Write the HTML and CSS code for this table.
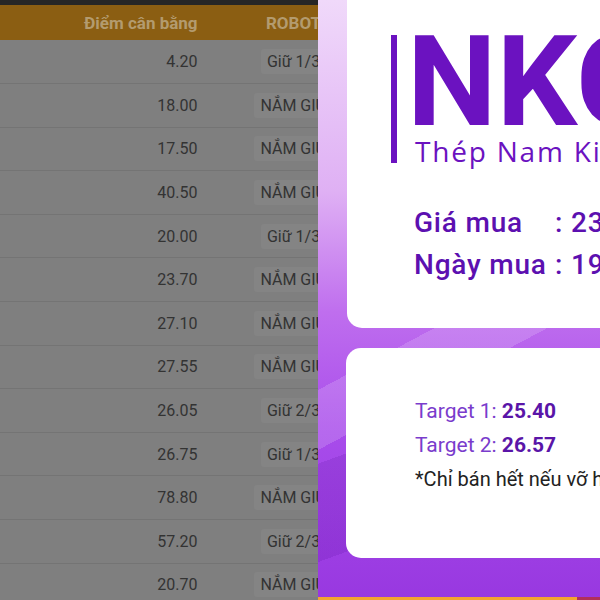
FILE: index.html
```html
<html lang="vi">
    <head>
        <title>Robot NKG</title>
        <link rel="stylesheet" href="styles.css">
    </head>
    <body>
        <div class="topbar"></div>
        <table class="robot-table">
            <thead>
                <tr>
                    <th class="col-code"></th>
                    <th class="col-price">Điểm cân bằng</th>
                    <th class="col-robot">ROBOT</th>
                    <th class="col-rest"></th>
                </tr>
            </thead>
            <tbody id="rows"></tbody>
        </table>

        <div class="modal">
            <div class="card card-top">
                <div class="logo">
                    <div class="logo-name">NKG</div>
                    <div class="logo-sub">Thép Nam Kim</div>
                </div>
                <div class="buy">
                    <div class="buy-line"><span class="buy-label">Giá mua</span>: 23.85</div>
                    <div class="buy-line"><span class="buy-label">Ngày mua</span>: 19/01/2021</div>
                </div>
            </div>
            <div class="card card-bottom">
                <div class="target">Target 1: <b>25.40</b></div>
                <div class="target">Target 2: <b>26.57</b></div>
                <div class="note">*Chỉ bán hết nếu vỡ hỗ trợ</div>
            </div>
            <div class="modal-space"></div>
            <div class="modal-foot"></div>
        </div>

        <script>
            //Rows of the table behind the popup
            const rowData = [
                ["4.20", "Giữ 1/3"],
                ["18.00", "NẮM GIỮ"],
                ["17.50", "NẮM GIỮ"],
                ["40.50", "NẮM GIỮ"],
                ["20.00", "Giữ 1/3"],
                ["23.70", "NẮM GIỮ"],
                ["27.10", "NẮM GIỮ"],
                ["27.55", "NẮM GIỮ"],
                ["26.05", "Giữ 2/3"],
                ["26.75", "Giữ 1/3"],
                ["78.80", "NẮM GIỮ"],
                ["57.20", "Giữ 2/3"],
                ["20.70", "NẮM GIỮ"]
            ];

            const rows = document.getElementById("rows");
            rowData.forEach(r => {
                const tr = document.createElement("tr");
                tr.innerHTML = `
                    <td></td>
                    <td class="col-price">${r[0]}</td>
                    <td class="col-robot"><span class="badge">${r[1]}</span></td>
                    <td></td>
                `;
                rows.appendChild(tr);
            });
        </script>
    </body>
</html>
```
FILE: styles.css
```css
body{
    margin:0;
    width:600px;
    height:600px;
    overflow:hidden;
    position:relative;
    background:#7f7f7f;
    font-family: Roboto, "Liberation Sans", sans-serif;
}
.topbar{
    height:5px;
    background:#262626;
}
.robot-table{
    width:560px;
    border-collapse:collapse;
    font-size:16px;
    color:#333;
}
.robot-table th{
    height:35px;
    padding:0 8px;
    background:#8b5e12;
    color:#b39b6f;
    font-size:17px;
    font-weight:700;
    white-space:nowrap;
}
.robot-table td{
    height:43.6px;
    padding:0 8px;
    border-bottom:1px solid #747474;
    white-space:nowrap;
}
.col-code{
    width:60px;
}
.col-price{
    width:112px;
    text-align:right;
}
.col-robot{
    width:160px;
    text-align:center;
}
.badge{
    display:inline-block;
    padding:3px 6px;
    background:#848484;
    border-radius:3px;
}

/* popup */
.modal{
    position:absolute;
    top:0;
    left:318px;
    width:282px;
    height:600px;
    overflow:hidden;
    display:flex;
    flex-direction:column;
    padding-left:29px;
    box-sizing:border-box;
    background:
        linear-gradient(152deg, transparent 52%, rgba(255,255,255,.16) 52%, rgba(255,255,255,.16) 60%, transparent 60%),
        linear-gradient(160deg, transparent 66%, rgba(70,0,140,.14) 66%, rgba(70,0,140,.14) 80%, transparent 80%),
        linear-gradient(180deg, #f0d9fa 0%, #dfb0f4 32%, #bf6eee 52%, #a84ceb 72%, #9838e0 100%);
}
.card{
    width:300px;
    flex-shrink:0;
    background:#fff;
    border-radius:15px;
    box-sizing:border-box;
}
.card-top{
    margin-top:-20px;
    height:348px;
    padding:55px 0 0 44px;
}
.card-bottom{
    margin-top:20px;
    margin-left:-1px;
    height:210px;
    padding:46px 0 0 69px;
    font-size:21px;
    line-height:34px;
}
.logo{
    border-left:6px solid #6b12c0;
    padding-left:10px;
    color:#6b12c0;
}
.logo-name{
    font-size:127px;
    font-weight:700;
    line-height:0.74;
    white-space:nowrap;
}
.logo-sub{
    margin:10px 0 0 8px;
    font-family:"Open Sans", Roboto, sans-serif;
    font-size:28px;
    letter-spacing:1.8px;
    line-height:24px;
    white-space:nowrap;
}
.buy{
    margin-top:39px;
    padding-left:23px;
    font-size:28px;
    font-weight:500;
    letter-spacing:0.8px;
    line-height:42px;
    color:#5c10b0;
    white-space:nowrap;
}
.buy-label{
    display:inline-block;
    width:141px;
}
.target{
    color:#7a3ccc;
    white-space:nowrap;
}
.target b{
    color:#5a15a8;
    font-weight:700;
}
.note{
    color:#222;
    font-size:20px;
    white-space:nowrap;
}
.modal-space{
    flex:1;
}
.modal-foot{
    height:3px;
    margin-left:-29px;
    background:linear-gradient(90deg, #f3a430 92%, #b0305a 92%);
}
```
